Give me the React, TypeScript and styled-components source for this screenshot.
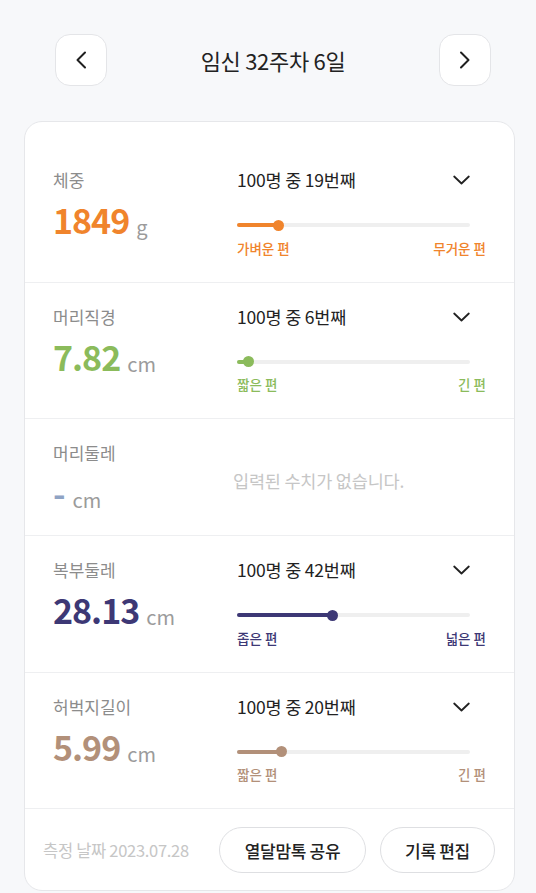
import React from "react";
import styled, { createGlobalStyle } from "styled-components";

const GlobalStyle = createGlobalStyle`
  html, body {
    margin: 0;
    padding: 0;
    background: #f7f8fa;
  }
  body {
    font-family: "Noto Sans CJK KR", "Noto Sans", sans-serif;
    color: #222;
    -webkit-font-smoothing: antialiased;
  }
  * { box-sizing: border-box; }
`;

const Page = styled.div`
  width: 536px;
  min-height: 893px;
  padding: 34px 0 0;
  background: #f7f8fa;
`;

const Header = styled.header`
  display: flex;
  align-items: center;
  justify-content: space-between;
  padding: 0 45px 0 55px;
`;

const NavButton = styled.button`
  width: 52px;
  height: 52px;
  border-radius: 15px;
  border: 1px solid #e4e5e8;
  background: #fff;
  display: flex;
  align-items: center;
  justify-content: center;
  padding: 0;
  cursor: pointer;
`;

const Title = styled.h1`
  margin: 0;
  font-size: 22px;
  font-weight: 400;
  color: #222;
  letter-spacing: -0.3px;
  line-height: 30px;
`;

const Card = styled.section`
  margin: 35px 21px 0 24px;
  background: #fff;
  border: 1px solid #e6e7ea;
  border-radius: 18px;
  padding-top: 24px;
  overflow: hidden;
`;

const Row = styled.div`
  display: grid;
  grid-template-columns: 184px 1fr;
  padding: 22px 28px 24px 28px;
  border-bottom: 1px solid #eeeff1;
`;

const LeftCol = styled.div`
  display: flex;
  flex-direction: column;
`;

const Label = styled.div`
  font-size: 17px;
  line-height: 24px;
  color: #8c8c8c;
`;

const ValueLine = styled.div`
  display: flex;
  align-items: baseline;
  margin-top: 8px;
  height: 38px;
  line-height: 40px;
`;

const ValueNum = styled.span<{ $color: string }>`
  font-size: 34px;
  font-weight: 700;
  letter-spacing: -1px;
  color: ${(p) => p.$color};
`;

const Unit = styled.span`
  font-size: 20px;
  line-height: 20px;
  color: #9b9b9b;
  margin-left: 7px;
  position: relative;
  top: 1px;
`;

const RightCol = styled.div`
  display: flex;
  flex-direction: column;
`;

const RankRow = styled.div`
  display: flex;
  align-items: center;
  justify-content: space-between;
  padding-right: 16px;
  height: 24px;
`;

const RankText = styled.span`
  font-size: 17.5px;
  line-height: 24px;
  color: #222;
  letter-spacing: -0.2px;
`;

const Track = styled.div`
  position: relative;
  height: 4px;
  margin: 31px 16px 0 0;
  border-radius: 2px;
  background: #efefef;
`;

const Fill = styled.div<{ $color: string }>`
  position: relative;
  height: 4px;
  border-radius: 2px;
  background: ${(p) => p.$color};
`;

const Dot = styled.span<{ $color: string }>`
  position: absolute;
  right: -5.5px;
  top: 50%;
  width: 11px;
  height: 11px;
  margin-top: -5.5px;
  border-radius: 50%;
  background: ${(p) => p.$color};
`;

const RangeLabels = styled.div<{ $color: string }>`
  display: flex;
  justify-content: space-between;
  margin-top: 10.5px;
  font-size: 13.5px;
  line-height: 20px;
  font-weight: 500;
  color: ${(p) => p.$color};
`;

const EmptyText = styled.div`
  align-self: center;
  margin: 8px 0 0 -4px;
  font-size: 17.5px;
  color: #c6c6c6;
  letter-spacing: -0.2px;
`;

const Dash = styled.span`
  font-size: 34px;
  font-weight: 700;
  color: #8fa3c4;
`;

const Footer = styled.div`
  display: flex;
  align-items: center;
  padding: 18px 19px 17px 18px;
  gap: 14px;
`;

const DateText = styled.span`
  flex: 1;
  font-size: 16.5px;
  color: #c6c6c6;
  letter-spacing: -0.3px;
`;

const PillButton = styled.button<{ $w: number }>`
  width: ${(p) => p.$w}px;
  height: 46px;
  border-radius: 23px;
  border: 1px solid #dedfe2;
  background: #fff;
  font-family: "Noto Sans CJK KR", "Noto Sans", sans-serif;
  font-size: 17px;
  font-weight: 500;
  color: #222;
  padding: 0;
  letter-spacing: -0.3px;
`;

const ChevronLeft = () => (
  <svg width="12" height="18" viewBox="0 0 12 18" fill="none">
    <path d="M10 1.5 L2.5 9 L10 16.5" stroke="#1f1f1f" strokeWidth="2" strokeLinecap="round" strokeLinejoin="round" />
  </svg>
);

const ChevronRight = () => (
  <svg width="12" height="18" viewBox="0 0 12 18" fill="none">
    <path d="M2 1.5 L9.5 9 L2 16.5" stroke="#1f1f1f" strokeWidth="2" strokeLinecap="round" strokeLinejoin="round" />
  </svg>
);

const ChevronDown = () => (
  <svg width="17" height="10" viewBox="0 0 17 10" fill="none">
    <path d="M1.2 1.5 L8.5 8.5 L15.8 1.5" stroke="#222" strokeWidth="1.8" strokeLinecap="round" strokeLinejoin="round" />
  </svg>
);

type Metric = {
  label: string;
  value?: string;
  unit: string;
  rank?: number;
  color: string;
  low?: string;
  high?: string;
};

const metrics: Metric[] = [
  { label: "체중", value: "1849", unit: "g", rank: 19, color: "#f0842c", low: "가벼운 편", high: "무거운 편" },
  { label: "머리직경", value: "7.82", unit: "cm", rank: 6, color: "#8bbb5b", low: "짧은 편", high: "긴 편" },
  { label: "머리둘레", unit: "cm", color: "#8fa3c4" },
  { label: "복부둘레", value: "28.13", unit: "cm", rank: 42, color: "#3d3875", low: "좁은 편", high: "넓은 편" },
  { label: "허벅지길이", value: "5.99", unit: "cm", rank: 20, color: "#b29079", low: "짧은 편", high: "긴 편" },
];

const MetricRow = ({ m }: { m: Metric }) => (
  <Row>
    <LeftCol>
      <Label>{m.label}</Label>
      <ValueLine>
        {m.value ? <ValueNum $color={m.color}>{m.value}</ValueNum> : <Dash>-</Dash>}
        <Unit>{m.unit}</Unit>
      </ValueLine>
    </LeftCol>
    {m.rank ? (
      <RightCol>
        <RankRow>
          <RankText>100명 중 {m.rank}번째</RankText>
          <ChevronDown />
        </RankRow>
        <Track>
          <Fill $color={m.color} style={{ width: `${m.rank - 1}%` }}>
            <Dot $color={m.color} />
          </Fill>
        </Track>
        <RangeLabels $color={m.color}>
          <span>{m.low}</span>
          <span>{m.high}</span>
        </RangeLabels>
      </RightCol>
    ) : (
      <EmptyText>입력된 수치가 없습니다.</EmptyText>
    )}
  </Row>
);

export default function App() {
  return (
    <>
      <GlobalStyle />
      <Page>
        <Header>
          <NavButton aria-label="이전">
            <ChevronLeft />
          </NavButton>
          <Title>임신 32주차 6일</Title>
          <NavButton aria-label="다음">
            <ChevronRight />
          </NavButton>
        </Header>
        <Card>
          {metrics.map((m) => (
            <MetricRow key={m.label} m={m} />
          ))}
          <Footer>
            <DateText>측정 날짜 2023.07.28</DateText>
            <PillButton $w={147}>열달맘톡 공유</PillButton>
            <PillButton $w={115}>기록 편집</PillButton>
          </Footer>
        </Card>
      </Page>
    </>
  );
}
